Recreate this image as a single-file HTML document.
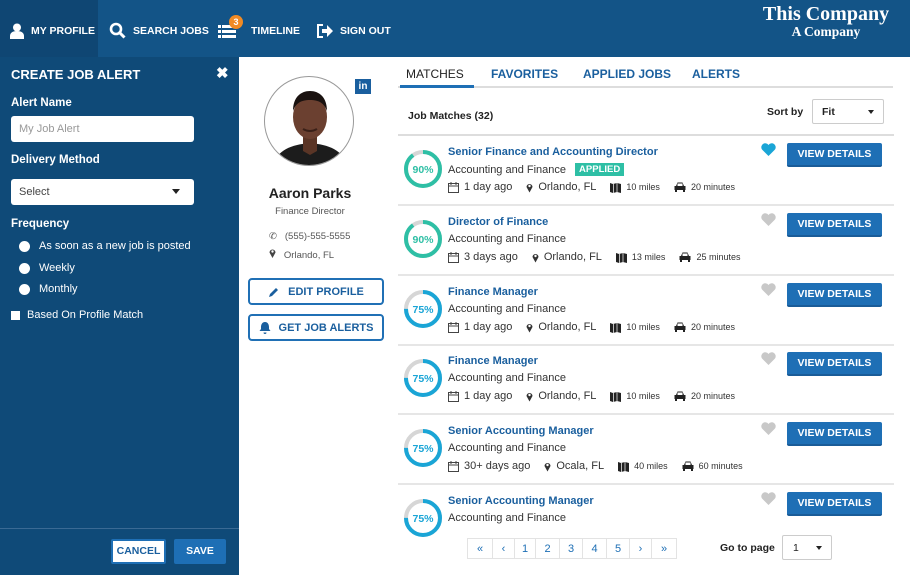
<!DOCTYPE html>
<html><head><meta charset="utf-8"><style>
*{margin:0;padding:0;box-sizing:border-box}
body{width:910px;height:575px;overflow:hidden;font-family:"Liberation Sans",sans-serif;background:#fff;position:relative}
.a{position:absolute}
#hdr{left:0;top:0;width:910px;height:57px;background:#135487}
.nav{top:2px;height:57px;display:flex;align-items:center;color:#fff;font-weight:bold;font-size:10.5px}
#side{left:0;top:57px;width:239px;height:518px;background:#0f4a78}
.lbl{color:#fff;font-weight:bold;font-size:11.5px}
.inp{background:#fff;border-radius:3px;left:11px;width:183px;height:26px;font-size:11px;color:#444;padding:7px 8px}
.rad{color:#fff;font-size:11px;display:flex;align-items:center}
.rad i{width:11px;height:11px;border-radius:50%;background:#fff;display:inline-block;margin-right:9px}
.btn{border-radius:2px;font-weight:bold;font-size:10.5px;text-align:center}
.obtn{left:248px;width:136px;height:27px;border:2px solid #2070b5;border-radius:4px;color:#1a5f9e;font-weight:bold;font-size:11px;display:flex;align-items:center;justify-content:center;gap:8px}
.row{left:398px;width:496px;height:70px;border-bottom:2px solid #e6e6e6}
.ring{left:5px;top:13px}
.tt{left:50px;top:10px;color:#1a5f9e;font-weight:bold;font-size:11px}
.sub{left:50px;top:27px;color:#333;font-size:11px;display:flex;align-items:center}
.meta{left:50px;top:45px;color:#333;font-size:11px;display:flex;align-items:center}
.meta span{display:inline-flex;align-items:center;margin-right:14px}
.meta svg{margin-right:5px}
.sm{font-size:9px}
.vd{left:389px;top:7px;width:95px;height:24px;background:#1e6fb5;color:#fff;font-weight:bold;font-size:10.5px;display:flex;align-items:center;justify-content:center;border-radius:2px;border-bottom:2px solid #1a5c98}
.hrt{left:363px;top:7px}
.pg{top:538px;height:21px;border:1px solid #e3e3e3;display:flex;color:#1e6fb5;font-size:11px}
.pg div{border-right:1px solid #e3e3e3;display:flex;align-items:center;justify-content:center}
</style></head><body>
<div id="hdr" class="a"></div>
<div class="a" style="left:0;top:0;width:98px;height:57px;background:#0f4673"></div>
<div class="a nav" style="left:10px">
<svg width="14" height="16" viewBox="0 0 14 16"><circle cx="7" cy="4.5" r="4" fill="#fff"/><path d="M0 16v-3c0-3 2.5-5 7-5s7 2 7 5v3z" fill="#fff"/></svg>
<span style="margin-left:7px">MY PROFILE</span></div>
<div class="a nav" style="left:109px">
<svg width="17" height="17" viewBox="0 0 17 17"><circle cx="7" cy="7" r="5" fill="none" stroke="#fff" stroke-width="2.6"/><path d="M10.5 10.5l5 5" stroke="#fff" stroke-width="3"/></svg>
<span style="margin-left:7px">SEARCH JOBS</span></div>
<div class="a nav" style="left:218px">
<svg width="18" height="14" viewBox="0 0 18 14"><g fill="#fff"><rect x="0" y="1" width="3" height="3"/><rect x="4" y="1" width="14" height="3"/><rect x="0" y="6" width="3" height="3"/><rect x="4" y="6" width="14" height="3"/><rect x="0" y="11" width="3" height="3"/><rect x="4" y="11" width="14" height="3"/></g></svg>
<span style="margin-left:15px">TIMELINE</span></div>
<div class="a" style="left:229px;top:15px;width:14px;height:14px;border-radius:50%;background:#f08a24;color:#fff;font-size:9px;font-weight:bold;text-align:center;line-height:14px">3</div>
<div class="a nav" style="left:317px">
<svg width="16" height="14" viewBox="0 0 16 14"><path d="M6 1H1v12h5" fill="none" stroke="#fff" stroke-width="2"/><path d="M5 5h5V1l6 6-6 6V9H5z" fill="#fff"/></svg>
<span style="margin-left:7px">SIGN OUT</span></div>
<div class="a" style="left:742px;top:4px;width:168px;text-align:center;color:#fff;font-family:'Liberation Serif',serif;font-weight:bold;line-height:1">
<div style="font-size:20px">This Company</div><div style="font-size:13.5px;margin-top:1px">A Company</div></div>

<div id="side" class="a"></div>
<div class="a" style="left:11px;top:67px;color:#fff;font-weight:bold;font-size:13px">CREATE JOB ALERT</div>
<div class="a" style="left:216px;top:64px;color:#fff;font-weight:bold;font-size:15px">✖</div>
<div class="a lbl" style="left:11px;top:97px">Alert Name</div>
<div class="a inp" style="top:116px;color:#999">My Job Alert</div>
<div class="a lbl" style="left:11px;top:154px">Delivery Method</div>
<div class="a inp" style="top:179px">Select<span style="position:absolute;right:14px;top:10px;border:4px solid transparent;border-top:5px solid #222;border-bottom:0"></span></div>
<div class="a lbl" style="left:11px;top:218px">Frequency</div>
<div class="a rad" style="left:19px;top:240px"><i></i>As soon as a new job is posted</div>
<div class="a rad" style="left:19px;top:262px"><i></i>Weekly</div>
<div class="a rad" style="left:19px;top:283px"><i></i>Monthly</div>
<div class="a rad" style="left:11px;top:309px"><i style="border-radius:0;width:9px;height:9px;margin-right:7px"></i>Based On Profile Match</div>
<div class="a" style="left:0;top:528px;width:239px;height:1px;background:#3a6a94"></div>
<div class="a btn" style="left:111px;top:539px;width:55px;height:25px;background:#fff;color:#1a5f9e;border:2px solid #1e6fb5;line-height:21px">CANCEL</div>
<div class="a btn" style="left:174px;top:539px;width:52px;height:25px;background:#1e6fb5;color:#fff;line-height:25px">SAVE</div>

<div class="a" style="left:264px;top:76px;width:90px;height:90px;border-radius:50%;border:1px solid #999;overflow:hidden;background:#fff">
<svg width="90" height="90" viewBox="0 0 90 90"><path d="M8 92c2-18 16-24 37-26 21 2 35 8 37 26z" fill="#1c1c1c"/><path d="M38 60h14v14l-7 4-7-4z" fill="#5a3526"/><ellipse cx="45" cy="40" rx="17" ry="22" fill="#6b4030"/><path d="M28 34c0-14 8-20 17-20s17 6 17 20c-3-8-8-11-17-11s-14 3-17 11z" fill="#1a1210"/><path d="M38 52q7 4 14 0" stroke="#3a2018" stroke-width="2" fill="none"/></svg></div>
<div class="a" style="left:355px;top:79px;width:16px;height:15px;background:#1a5f9e;color:#fff;font-size:10px;font-weight:bold;text-align:center;line-height:15px">in</div>
<div class="a" style="left:240px;top:185px;width:140px;text-align:center;font-weight:bold;font-size:14px;color:#222">Aaron Parks</div>
<div class="a" style="left:240px;top:206px;width:140px;text-align:center;font-size:9.5px;color:#555">Finance Director</div>
<div class="a" style="left:269px;top:231px;font-size:9.5px;color:#555">✆&nbsp;&nbsp; (555)-555-5555</div>
<div class="a" style="left:269px;top:248px;font-size:9.5px;color:#555"><svg width="7" height="10" viewBox="0 0 7 10"><path d="M3.5 10L0.5 4.5a3 3 0 1 1 6 0z" fill="#444"/><circle cx="3.5" cy="3.5" r="1.2" fill="#fff"/></svg>&nbsp;&nbsp; Orlando, FL</div>
<div class="a obtn" style="top:278px"><svg width="12" height="12" viewBox="0 0 12 12"><path d="M1 11l1-3 6-6 2 2-6 6z" fill="#1a5f9e"/></svg>EDIT PROFILE</div>
<div class="a obtn" style="top:314px"><svg width="12" height="13" viewBox="0 0 12 13"><path d="M6 1c3 0 4 3 4 5v2l1.5 2H.5L2 8V6c0-2 1-5 4-5zM4.5 11.5h3a1.5 1.5 0 0 1-3 0z" fill="#1a5f9e"/></svg>GET JOB ALERTS</div>

<div class="a" style="left:406px;top:67px;font-size:12px;color:#222">MATCHES</div>
<div class="a" style="left:491px;top:67px;font-size:12px;color:#1a5f9e;font-weight:bold">FAVORITES</div>
<div class="a" style="left:583px;top:67px;font-size:12px;color:#1a5f9e;font-weight:bold">APPLIED JOBS</div>
<div class="a" style="left:692px;top:67px;font-size:12px;color:#1a5f9e;font-weight:bold">ALERTS</div>
<div class="a" style="left:398px;top:86px;width:495px;height:2px;background:#ddd"></div>
<div class="a" style="left:400px;top:85px;width:74px;height:3px;background:#1e6fb5"></div>
<div class="a" style="left:408px;top:110px;font-size:10.5px;font-weight:bold;color:#222">Job Matches (32)</div>
<div class="a" style="left:767px;top:106px;font-size:10.5px;font-weight:bold;color:#222">Sort by</div>
<div class="a" style="left:812px;top:99px;width:72px;height:25px;border:1px solid #ccc;border-radius:2px;font-size:10.5px;font-weight:bold;padding:6px 9px;color:#222">Fit<span style="position:absolute;right:9px;top:10px;border:3.5px solid transparent;border-top:4px solid #222;border-bottom:0"></span></div>
<div class="a" style="left:398px;top:134px;width:496px;height:2px;background:#ddd"></div>

<div id="rows"></div>
<script>
const rows=[
[136,90,"Senior Finance and Accounting Director",1,"1 day ago","Orlando, FL","10 miles","20 minutes",1],
[206,90,"Director of Finance",0,"3 days ago","Orlando, FL","13 miles","25 minutes",0],
[276,75,"Finance Manager",0,"1 day ago","Orlando, FL","10 miles","20 minutes",0],
[345,75,"Finance Manager",0,"1 day ago","Orlando, FL","10 miles","20 minutes",0],
[415,75,"Senior Accounting Manager",0,"30+ days ago","Ocala, FL","40 miles","60 minutes",0],
[485,75,"Senior Accounting Manager",0,null,null,null,null,0]];
const cal='<svg width="11" height="11" viewBox="0 0 11 11"><rect x="0.5" y="1.5" width="10" height="9" fill="none" stroke="#444"/><path d="M0.5 4h10M3 0v3M8 0v3" stroke="#444"/></svg>';
const pin='<svg width="7" height="11" viewBox="0 0 7 10"><path d="M3.5 10L0.5 4.5a3 3 0 1 1 6 0z" fill="#333"/><circle cx="3.5" cy="3.5" r="1.2" fill="#fff"/></svg>';
const map='<svg width="11" height="11" viewBox="0 0 11 11"><path d="M0 1l3 1 4-1 4 1v9l-4-1-4 1-3-1z" fill="#222"/><path d="M3.5 2v9M7 1v9" stroke="#fff" stroke-width=".7"/></svg>';
const car='<svg width="12" height="10" viewBox="0 0 12 10"><path d="M2 4l1.5-3.5h5L10 4h1.5v4h-11V4z" fill="#222"/><rect x="3.5" y="1.5" width="5" height="2.5" fill="#fff"/><rect x="1" y="8" width="2" height="2" fill="#222"/><rect x="9" y="8" width="2" height="2" fill="#222"/></svg>';
let h='';
for(const r of rows){
 const col=r[1]==90?'#2ebfa5':'#1aa5d6';
 const c=2*Math.PI*17, d=c*r[1]/100;
 h+=`<div class="a row" style="top:${r[0]}px${r[0]==485?';border:0':''}">
 <svg class="a ring" width="40" height="40" viewBox="0 0 40 40"><circle cx="20" cy="20" r="17" fill="none" stroke="#d6d6d6" stroke-width="4"/><circle cx="20" cy="20" r="17" fill="none" stroke="${col}" stroke-width="4" stroke-dasharray="${d} ${c}" transform="rotate(-90 20 20)"/><text x="20" y="24" text-anchor="middle" font-family="Liberation Sans" font-weight="bold" font-size="10.5" fill="${col}">${r[1]}%</text></svg>
 <div class="a tt">${r[2]}</div>
 <div class="a sub">Accounting and Finance${r[3]?'<span style="margin-left:9px;background:#2ebfa5;color:#fff;font-weight:bold;font-size:9.5px;padding:1px 4px">APPLIED</span>':''}</div>
 ${r[4]?`<div class="a meta"><span>${cal}${r[4]}</span><span>${pin}${r[5]}</span><span>${map}<b class="sm" style="font-weight:normal">${r[6]}</b></span><span>${car}<b class="sm" style="font-weight:normal">${r[7]}</b></span></div>`:''}
 <svg class="a hrt" width="15" height="13" viewBox="0 0 15 13"><path d="M7.5 13L1 6.5A3.6 3.6 0 0 1 7.5 2a3.6 3.6 0 0 1 6.5 4.5z" fill="${r[8]?'#1aa5d6':'#c8c8c8'}"/></svg>
 <div class="a vd">VIEW DETAILS</div></div>`;
}
document.getElementById('rows').innerHTML=h;
</script>

<div class="a pg" style="left:467px">
<div style="width:25px">«</div><div style="width:22px">‹</div><div style="width:21px">1</div><div style="width:24px">2</div><div style="width:23px">3</div><div style="width:24px">4</div><div style="width:23px">5</div><div style="width:22px">›</div><div style="width:24px;border:0">»</div></div>
<div class="a" style="left:720px;top:542px;font-size:10.5px;font-weight:bold;color:#222">Go to page</div>
<div class="a" style="left:782px;top:535px;width:50px;height:25px;border:1px solid #ccc;border-radius:2px;font-size:10.5px;padding:6px 10px;color:#222">1<span style="position:absolute;right:9px;top:10px;border:3.5px solid transparent;border-top:4px solid #222;border-bottom:0"></span></div>
</body></html>
